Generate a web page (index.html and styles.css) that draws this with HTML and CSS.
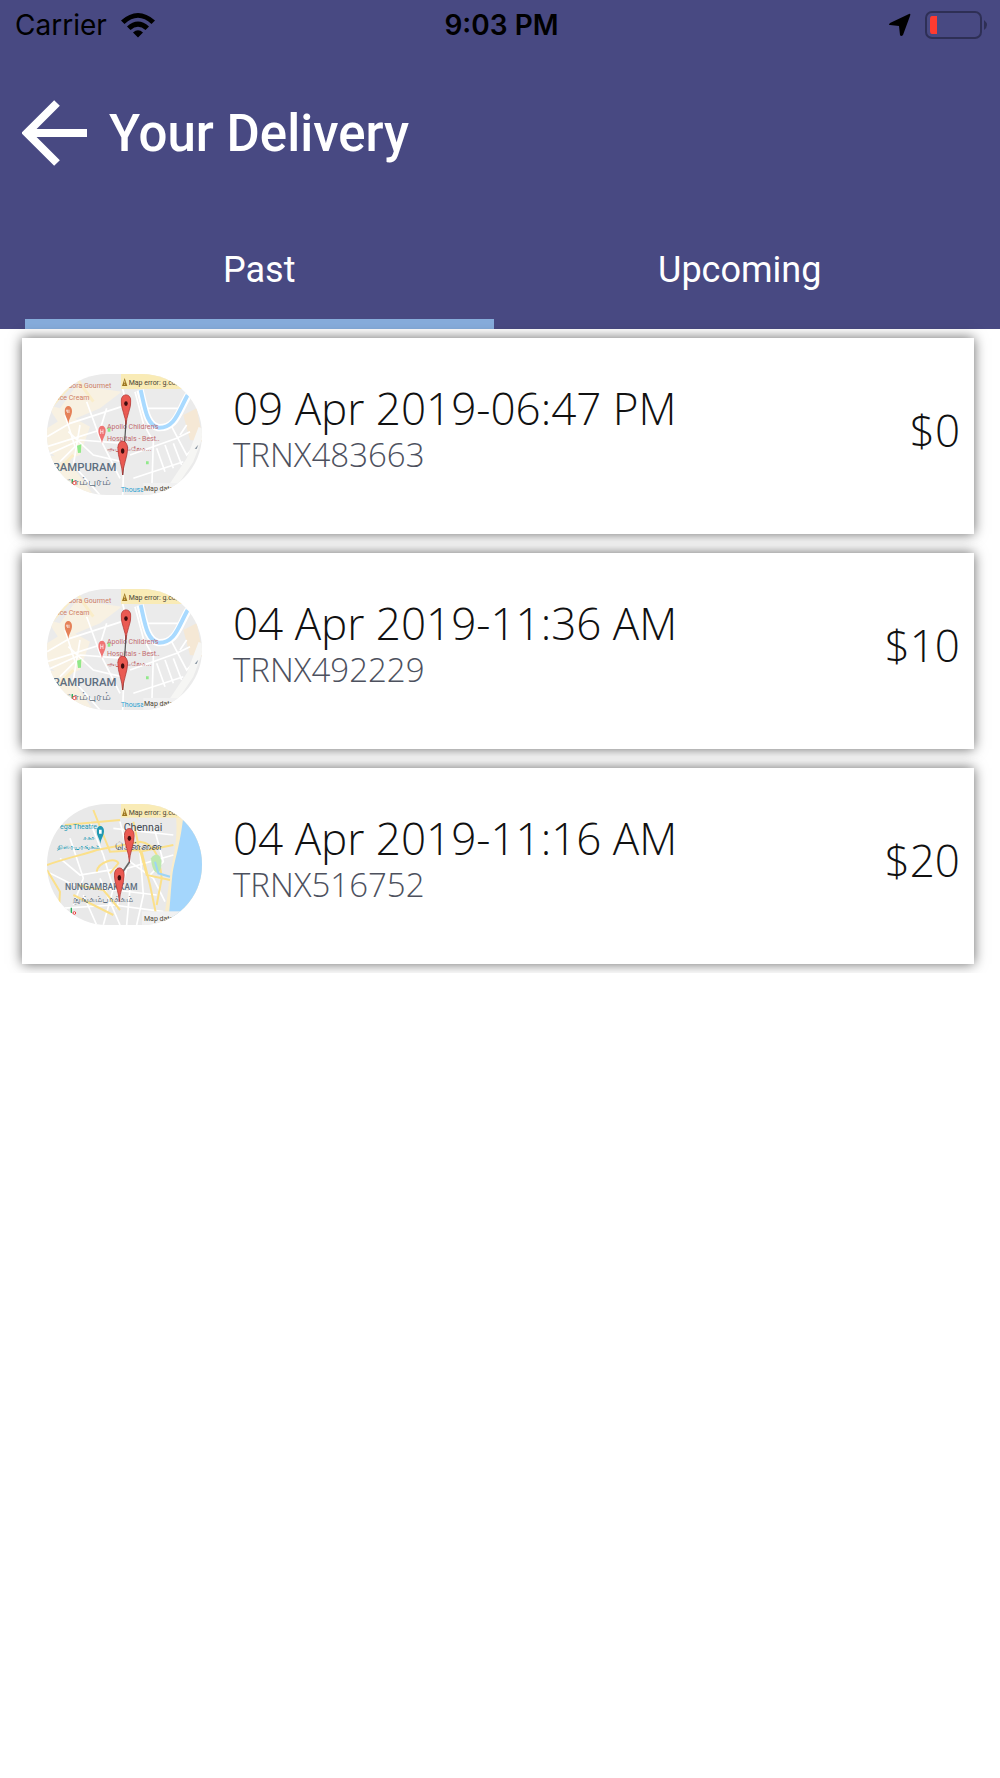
FILE: index.html
```html
<!DOCTYPE html>
<html lang="en">
<head>
    <meta charset="UTF-8">
    <meta name="viewport" content="width=device-width, initial-scale=1.0">
    <title>Your Delivery</title>
    <link rel="stylesheet" href="styles.css">
</head>
<body>
    <!-- Shared map drawings -->
    <svg class="sprites" aria-hidden="true">
        <symbol id="pin" viewBox="0 0 30 90" preserveAspectRatio="none">
            <path d="M15 89 C14 66 1 40 1 20 A14 19 0 0 1 29 20 C29 40 16 66 15 89Z" fill="#ea5a52" stroke="#a83432" stroke-width="2"/>
            <ellipse cx="15" cy="27" rx="5" ry="7" fill="#3c0d0e"/>
        </symbol>

        <symbol id="place" viewBox="0 0 24 56">
            <path d="M12 55 C11 40 1 31 1 16 A11 15 0 0 1 23 16 C23 31 13 40 12 55Z" fill="currentColor"/>
        </symbol>

        <symbol id="map-rampuram" viewBox="21 27 465 363">
            <rect x="21" y="27" width="465" height="363" fill="#ebebeb"/>
            <path d="M21 190 L85 150 L150 185 L120 270 L60 290 L21 250Z M21 120 L60 130 L110 60 L245 80 L180 130 L60 180Z M21 270 L80 280 L160 390 L21 390Z" fill="#f8f1e2"/>
            <path d="M430 150 L470 130 L490 230 L450 225Z" fill="#f5e8d5"/>
            <path d="M300 75 C315 130 320 180 355 188 C410 190 415 140 445 90" fill="none" stroke="#fff" stroke-width="22"/>
            <g fill="none" stroke="#fff" stroke-width="5">
                <path d="M21 215 L90 175 L245 125 M75 150 L105 245 L60 290 M21 245 L180 195 L200 130"/>
                <path d="M85 200 L160 270 L245 290 M120 180 L100 300 L180 390 M21 270 L120 225 L250 235"/>
                <path d="M245 60 L258 110 L248 390 M140 110 L180 220 L240 340"/>
                <path d="M285 80 L310 175 L340 230 L335 385 M270 270 L410 220 L450 200"/>
                <path d="M350 250 L375 320 M375 240 L400 310 M400 235 L425 300 M280 340 L430 290"/>
                <path d="M310 130 L430 130 M395 185 L440 270 L486 220 M440 180 L420 210"/>
            </g>
            <path d="M486 190 L450 285 L380 390" fill="none" stroke="#f6f6f4" stroke-width="22"/>
            <path d="M21 140 L110 40 M100 27 L160 110 M21 350 L100 270" fill="none" stroke="#faedc9" stroke-width="9"/>
            <path d="M302 75 C315 130 320 180 355 188 C405 190 415 140 443 90" fill="none" stroke="#a9daff" stroke-width="12"/>
            <path d="M111 242 L124 238 L123 263 L114 264Z M318 289 h8 v9 h-8Z M203 188 h8 v12 h-8Z" fill="#91e98a"/>
            <path d="M464 251 L475 239 L470 252Z" fill="#8793a0"/>

            <g class="map-text food">
                <text x="85" y="68">dora Gourmet</text>
                <text x="54" y="104">ice Cream</text>
            </g>
            <use href="#place" x="73" y="122" width="24" height="56" class="food"/>
            <path d="M80 134 v6 m3 -6 v10 m4 -10 v10" stroke="#fff" stroke-width="2"/>
            <use href="#place" x="174" y="181" width="24" height="56" class="hospital-pin"/>
            <path d="M182 193 v14 m7 -14 v14 m-7 -7 h7" fill="none" stroke="#fff" stroke-width="2"/>
            <g class="map-text hospital">
                <text x="201" y="192">Apollo Children's</text>
                <text x="201" y="227">Hospitals - Best..</text>
                <text x="201" y="257">அப்பல்லோ...</text>
            </g>
            <g class="map-text area">
                <text x="38" y="317">RAMPURAM</text>
                <text x="76" y="359">ாம்புரம்</text>
            </g>
            <path d="M97 342 v15" stroke="#2eae60" stroke-width="4"/>
            <circle cx="103" cy="354" r="5" fill="#fff" stroke="#ea4444" stroke-width="3"/>

            <rect x="243" y="27" width="243" height="45" fill="#f9ebb6"/>
            <path d="M254 39 L262 63 H246Z" fill="#9c741d"/>
            <path d="M254 47 v8 m0 2 v3" stroke="#f9ebb6" stroke-width="2"/>
            <text x="266" y="59" class="map-text dark">Map error: g.co/static</text>

            <path d="M258 165 L248 330" stroke="#555" stroke-width="4"/>
            <use href="#pin" x="242" y="88" width="32" height="92"/>
            <use href="#pin" x="232" y="227" width="32" height="104"/>
            <text x="242" y="380" class="map-text water">Thousand</text>
            <rect x="310" y="354" width="176" height="36" fill="#f1f1f1"/>
            <text x="312" y="378" class="map-text dark">Map data ©2019</text>
        </symbol>

        <symbol id="map-chennai" viewBox="21 27 465 363">
            <rect x="21" y="27" width="465" height="363" fill="#e9e9e9"/>
            <path d="M486 27 H400 C420 90 405 170 390 240 C382 300 378 350 365 390 H486Z" fill="#f9edcc"/>
            <path d="M486 60 L429 72 C420 150 405 190 397 240 C390 310 390 350 382 390 H486Z" fill="#a4d6fc"/>
            <g fill="none" stroke="#fff" stroke-width="5">
                <path d="M60 190 L120 240 L240 220 M90 130 L130 250 L100 330 M150 80 L190 180 L220 280 L190 390"/>
                <path d="M21 230 L100 270 L350 300 M240 80 L270 200 L340 250 L375 320 M60 340 L220 330 L370 350"/>
                <path d="M300 170 L310 300 L290 390 M230 340 L260 220 L400 180 M220 100 L400 120 M130 300 L170 390"/>
                <path d="M340 90 L370 200 L330 240 M180 250 L240 390 M270 280 L260 390"/>
            </g>
            <g fill="none" stroke="#fbe08a" stroke-width="6">
                <path d="M21 210 C90 185 130 180 170 165 L300 140 C350 145 360 200 365 250 L350 330"/>
                <path d="M160 45 L190 120 L210 170 L300 165 L320 240 L390 255 M21 225 L60 290 L55 370"/>
                <path d="M170 230 C175 200 230 185 235 205 L210 235 M110 270 L190 285 L240 345"/>
                <path d="M75 90 L240 75 M280 80 L300 170 L400 150 M305 170 L330 270 L355 390 M100 300 L220 360"/>
            </g>
            <path d="M333 190 C355 160 375 195 358 232 C345 240 335 220 333 190Z" fill="#bde8b0"/>
            <path d="M345 200 L355 235 L390 245" fill="none" stroke="#9ed5f5" stroke-width="6"/>

            <g class="map-text theatre">
                <text x="60" y="103">ega Theatre</text>
                <text x="130" y="134">சகா</text>
                <text x="50" y="163">திரையரங்கம்</text>
            </g>
            <use href="#place" x="169" y="92" width="24" height="56" class="theatre"/>
            <path d="M177 104 h8 v12 h-8Z" fill="#fff"/>
            <g class="map-text city">
                <text x="251" y="108">Chennai</text>
                <text x="225" y="166">சென்னை</text>
            </g>
            <g class="map-text area small">
                <text x="75" y="285">NUNGAMBAKKAM</text>
                <text x="98" y="321">நுங்கம்பாக்கம்</text>
            </g>
            <path d="M94 338 v16" stroke="#2eae60" stroke-width="4"/>
            <circle cx="103" cy="354" r="4" fill="#fff" stroke="#ea4444" stroke-width="3"/>

            <rect x="243" y="27" width="243" height="41" fill="#f9ebb6"/>
            <path d="M254 39 L262 63 H246Z" fill="#9c741d"/>
            <path d="M254 47 v8 m0 2 v3" stroke="#f9ebb6" stroke-width="2"/>
            <text x="266" y="59" class="map-text dark">Map error: g.co/static</text>

            <path d="M269 200 L238 245" stroke="#666" stroke-width="5"/>
            <use href="#pin" x="252" y="99" width="32" height="103"/>
            <use href="#pin" x="222" y="217" width="32" height="104"/>
            <rect x="306" y="349" width="180" height="41" fill="#f1f1f1"/>
            <text x="312" y="378" class="map-text dark">Map data ©2019</text>
        </symbol>
    </svg>

    <header class="header">
        <div class="status-bar">
            <div class="status-left">
                <span>Carrier</span>
                <svg class="wifi" viewBox="0 0 34 25" aria-hidden="true">
                    <path d="M0 7.500 Q17 -7.500 34 7.500 L30.500 11 Q17 -1.500 3.500 11Z M6 13.500 Q17 3.500 28 13.500 L24.500 17 Q17 10.500 9.500 17Z M12 19.500 Q17 15 22 19.500 L17 24.500Z"/>
                </svg>
            </div>
            <span class="status-time">9:03 PM</span>
            <div class="status-right">
                <svg class="location" viewBox="0 0 22 24" aria-hidden="true">
                    <path d="M20 1 L1 10 Q-1 12 1 12 L10 13 L11 22 Q12 24 14 22 L21 3 Q22 0 20 1Z"/>
                </svg>
                <svg class="battery" viewBox="0 0 63 28" aria-hidden="true">
                    <rect x="1" y="1" width="55" height="26" rx="6" fill="none" stroke="#2e2f55" stroke-width="2"/>
                    <path d="M7 5 H12 V23 H7 Q5 23 5 20 V8 Q5 5 7 5Z" fill="#ff3b30"/>
                    <path d="M59 9 Q65 14 59 19Z" fill="#2e2f55"/>
                </svg>
            </div>
        </div>

        <div class="title-bar">
            <button type="button" class="back-button" aria-label="Back">
                <svg viewBox="0 0 66 66" aria-hidden="true">
                    <path d="M35 3 L5 33 L35 63 M7 33 H65" fill="none" stroke="#fff" stroke-width="8"/>
                </svg>
            </button>
            <h1>Your Delivery</h1>
        </div>

        <nav class="tabs">
            <button type="button" class="tab active">Past</button>
            <button type="button" class="tab">Upcoming</button>
        </nav>
    </header>

    <main class="delivery-list">
        <article class="card">
            <svg class="map" role="img" aria-label="Route map"><use href="#map-rampuram"/></svg>
            <div class="details">
                <h2>09 Apr 2019-06:47 PM</h2>
                <p>TRNX483663</p>
            </div>
            <span class="price">$0</span>
        </article>

        <article class="card">
            <svg class="map" role="img" aria-label="Route map"><use href="#map-rampuram"/></svg>
            <div class="details">
                <h2>04 Apr 2019-11:36 AM</h2>
                <p>TRNX492229</p>
            </div>
            <span class="price">$10</span>
        </article>

        <article class="card">
            <svg class="map" role="img" aria-label="Route map"><use href="#map-chennai"/></svg>
            <div class="details">
                <h2>04 Apr 2019-11:16 AM</h2>
                <p>TRNX516752</p>
            </div>
            <span class="price">$20</span>
        </article>
    </main>
</body>
</html>
```
FILE: styles.css
```css
* {
    box-sizing: border-box;
}

body {
    margin: 0;
    background-color: #fff;
    font-family: "Open Sans", "Noto Sans", sans-serif;
    color: #111;
}

h1, h2, p {
    margin: 0;
}

button {
    padding: 0;
    border: none;
    background: none;
    color: inherit;
    font-family: inherit;
    cursor: pointer;
}

.sprites {
    position: absolute;
    width: 0;
    height: 0;
}

/* Header */
.header {
    background-color: #484982;
    color: #fff;
}

.status-bar {
    display: grid;
    grid-template-columns: 1fr auto 1fr;
    align-items: center;
    height: 50px;
    padding: 0 12px 0 15px;
    font-family: Inter, sans-serif;
    font-size: 28px;
    color: #000;
}

.status-left, .status-right {
    display: flex;
    align-items: center;
    gap: 14px;
}

.status-right {
    justify-content: flex-end;
}

.status-time {
    font-weight: 600;
}

.wifi {
    width: 34px;
    height: 25px;
}

.location {
    width: 22px;
    height: 24px;
}

.battery {
    width: 63px;
    height: 28px;
}

.title-bar {
    display: flex;
    align-items: center;
    gap: 21px;
    height: 166px;
    padding: 0 22px;
}

.back-button, .back-button svg {
    display: block;
    width: 66px;
    height: 66px;
}

.title-bar h1 {
    font-family: Roboto, sans-serif;
    font-size: 51px;
    font-weight: 500;
}

.tabs {
    display: flex;
    gap: 12px;
    height: 113px;
    padding: 0 26px 0 25px;
}

.tab {
    flex: 1;
    padding-top: 4px;
    border-bottom: 10px solid transparent;
    font-family: Roboto, sans-serif;
    font-size: 36px;
}

.tab.active {
    border-bottom-color: #86acdb;
}

/* Delivery cards */
.delivery-list {
    display: flex;
    flex-direction: column;
    gap: 19px;
    padding: 9px 26px 9px 22px;
}

.card {
    display: flex;
    align-items: center;
    height: 196px;
    padding: 0 14px 4px 25px;
    background-color: #fff;
    box-shadow: 0 0 12px rgba(0, 0, 0, 0.6);
}

.map {
    flex-shrink: 0;
    width: 155px;
    height: 121px;
    border-radius: 60px;
    overflow: hidden;
}

.details {
    flex: 1;
    padding: 0 0 8px 31px;
}

.details h2 {
    font-size: 44px;
    font-weight: 300;
    line-height: 50px;
}

.details p {
    font-size: 33px;
    font-weight: 300;
    line-height: 44px;
    color: #4d515e;
}

.price {
    padding-bottom: 8px;
    font-size: 44px;
    font-weight: 300;
}

/* Map labels */
.map-text {
    font-family: Roboto, "Noto Sans", sans-serif;
    font-size: 21px;
    fill: currentColor;
}

.food {
    color: #e58158;
}

.food.map-text {
    color: #cf7f65;
}

.hospital {
    color: #c16b70;
}

.hospital-pin {
    color: #ef7373;
}

.theatre {
    color: #2199b3;
}

.area {
    color: #5d6e80;
    font-size: 34px;
    font-weight: 500;
}

.area.small {
    font-size: 26px;
}

.city {
    color: #3f4750;
    font-size: 32px;
}

.water {
    color: #2a9fd0;
}

.dark {
    color: #4b4535;
}
```
